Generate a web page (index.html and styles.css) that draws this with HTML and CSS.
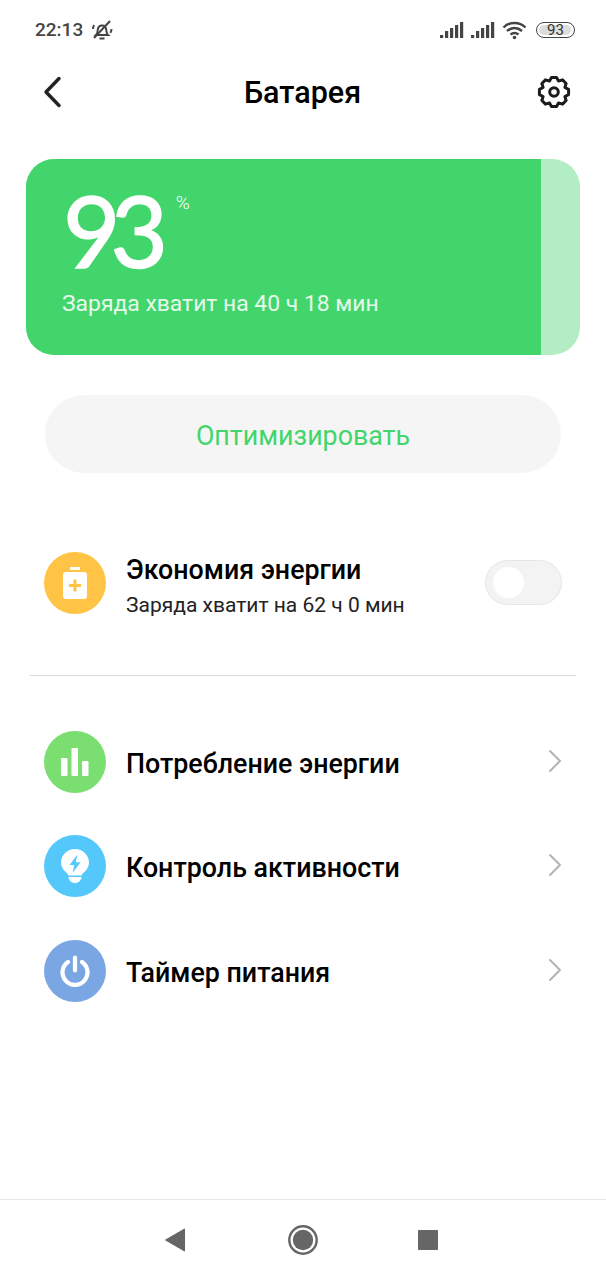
FILE: index.html
```html
<!DOCTYPE html>
<html>
<head>
    <title>Батарея</title>
    <meta charset="utf-8">
    <link rel="stylesheet" href="styles.css">
</head>
<body>
    <div class="screen">
        <div class="status">
            <div class="status-left">
                <span class="time">22:13</span>
                <svg class="bell" width="22" height="22" viewBox="0 0 22 22" fill="none" stroke="#444" stroke-width="2">
                    <path d="M5 16c1.400-1.200 1.600-2.800 1.700-4.700.2-3 2-4.800 4.300-4.800s4.100 1.800 4.300 4.800c.1 1.900.3 3.500 1.700 4.700z"/>
                    <path d="M8.500 19.500h5"/>
                    <path d="M3 19 19 2"/>
                    <path d="M2 10c0-1.500.4-2.800 1.200-3.800M20.500 10c0 1.500-.4 2.800-1.200 3.800"/>
                </svg>
            </div>
            <div class="status-right">
                <svg class="signal" width="24" height="18" viewBox="0 0 24 18" fill="#444">
                    <rect x="0" y="14" width="3.200" height="3"/><rect x="5" y="10" width="3.200" height="7"/><rect x="10" y="7" width="3.200" height="10"/><rect x="15" y="4" width="3.200" height="13"/><rect x="20" y="1" width="3.200" height="16"/>
                </svg>
                <svg class="signal" width="24" height="18" viewBox="0 0 24 18" fill="#444">
                    <rect x="0" y="14" width="3.200" height="3"/><rect x="5" y="10" width="3.200" height="7"/><rect x="10" y="7" width="3.200" height="10"/><rect x="15" y="4" width="3.200" height="13"/><rect x="20" y="1" width="3.200" height="16"/>
                </svg>
                <svg class="wifi" width="26" height="20" viewBox="0 0 26 20" fill="none" stroke="#444" stroke-width="2.400">
                    <path d="M1.500 7.500C7.500 1.500 17.500 1.500 23.500 7.500"/>
                    <path d="M5 11c4.500-4 10.500-4 15 0"/>
                    <path d="M8.500 14.500c2.500-2 5.500-2 8 0"/>
                    <circle cx="12.500" cy="17.500" r="1.800" fill="#444" stroke="none"/>
                </svg>
                <div class="battery"><span class="battery-fill"></span><span class="battery-num">93</span></div>
            </div>
        </div>

        <div class="header">
            <svg width="20" height="32" viewBox="0 0 20 32" fill="none" stroke="#222" stroke-width="3.400" stroke-linecap="round" stroke-linejoin="round">
                <path d="M16 2.500 3 16l13 13.500"/>
            </svg>
            <h1 class="title">Батарея</h1>
            <svg width="34" height="34" viewBox="0 0 34 34" fill="none" stroke="#1c1c1c" stroke-width="3" stroke-linejoin="round">
                <path d="M14.430 2.430 19.570 2.430 21.520 6.100 25.490 4.880 29.120 8.510 27.900 12.480 31.570 14.430 31.570 19.570 27.900 21.520 29.120 25.490 25.490 29.120 21.520 27.900 19.570 31.570 14.430 31.570 12.480 27.900 8.510 29.120 4.880 25.490 6.100 21.520 2.430 19.570 2.430 14.430 6.100 12.480 4.880 8.510 8.510 4.880 12.480 6.100z"/>
                <circle cx="17" cy="17" r="4.300"/>
            </svg>
        </div>

        <div class="card">
            <div class="card-main">
                <div class="level"><span class="level-num">93</span><span class="level-unit">%</span></div>
                <div class="card-text">Заряда хватит на 40 ч 18 мин</div>
            </div>
            <div class="card-rest"></div>
        </div>

        <div class="optimize">Оптимизировать</div>

        <div class="row row-saver">
            <div class="icon icon-yellow">
                <svg width="26" height="32" viewBox="0 0 26 32" fill="#fff">
                    <rect x="8" y="0" width="10" height="3" rx="1"/>
                    <rect x="1" y="5" width="24" height="27" rx="3"/>
                    <path d="M11.500 12.500h3v4.500H19v3h-4.500v4.500h-3V20H7v-3h4.500z" fill="#ffc445"/>
                </svg>
            </div>
            <div class="row-text">
                <div class="row-title">Экономия энергии</div>
                <div class="row-sub">Заряда хватит на 62 ч 0 мин</div>
            </div>
            <div class="toggle"><span class="knob"></span></div>
        </div>

        <div class="divider"></div>

        <div class="list">
            <div class="row">
                <div class="icon icon-green">
                    <svg width="28" height="28" viewBox="0 0 28 28" fill="#fff">
                        <rect x="0" y="10" width="6.500" height="18" rx="1.200"/>
                        <rect x="10.500" y="0" width="6.500" height="28" rx="1.200"/>
                        <rect x="21" y="13" width="6.500" height="15" rx="1.200"/>
                    </svg>
                </div>
                <div class="row-title">Потребление энергии</div>
                <svg class="chevron" width="14" height="24" viewBox="0 0 14 24" fill="none" stroke="#b4b4b4" stroke-width="2" stroke-linecap="round" stroke-linejoin="round"><path d="M2 2l10 10L2 22"/></svg>
            </div>
            <div class="row">
                <div class="icon icon-blue">
                    <svg width="28" height="34" viewBox="0 0 28 34" fill="#fff">
                        <path d="M14 0C6.300 0 0 6 0 13.300c0 4.500 2.300 7.800 5 10 1.200 1 2 2 2.300 3.200h13.400c.3-1.200 1.100-2.200 2.300-3.200 2.700-2.200 5-5.500 5-10C28 6 21.700 0 14 0z"/>
                        <path d="M7.500 28h13c0 3.300-3 6-6.500 6s-6.500-2.700-6.500-6z"/>
                        <path d="M16.500 5.500 8.500 16h4.800l-1.800 8 8-10.800h-4.800z" fill="#55c8fb"/>
                    </svg>
                </div>
                <div class="row-title">Контроль активности</div>
                <svg class="chevron" width="14" height="24" viewBox="0 0 14 24" fill="none" stroke="#b4b4b4" stroke-width="2" stroke-linecap="round" stroke-linejoin="round"><path d="M2 2l10 10L2 22"/></svg>
            </div>
            <div class="row">
                <div class="icon icon-slate">
                    <svg width="30" height="32" viewBox="0 0 30 32" fill="none" stroke="#fff" stroke-width="4.200" stroke-linecap="round">
                        <path d="M15 2.500v13"/>
                        <path d="M8 7a12.500 12.500 0 1 0 14 0"/>
                    </svg>
                </div>
                <div class="row-title">Таймер питания</div>
                <svg class="chevron" width="14" height="24" viewBox="0 0 14 24" fill="none" stroke="#b4b4b4" stroke-width="2" stroke-linecap="round" stroke-linejoin="round"><path d="M2 2l10 10L2 22"/></svg>
            </div>
        </div>

        <div class="navbar">
            <svg width="20" height="24" viewBox="0 0 20 24" fill="#666"><path d="M19.500 1v22L.5 12z" stroke="#666" stroke-linejoin="round"/></svg>
            <svg class="nav-home" width="30" height="30" viewBox="0 0 30 30"><circle cx="15" cy="15" r="13.700" fill="none" stroke="#666" stroke-width="2.400"/><circle cx="15" cy="15" r="10.200" fill="#666"/></svg>
            <div class="nav-square"></div>
        </div>
    </div>
</body>
</html>
```

FILE: styles.css
```css
* {
    box-sizing: border-box;
}
body {
    margin: 0;
    background: white;
    font-family: Roboto, sans-serif;
    color: #000;
}
.screen {
    width: 606px;
    height: 1280px;
    display: flex;
    flex-direction: column;
    overflow: hidden;
}
.status {
    height: 59px;
    padding: 0 31px 0 35px;
    display: flex;
    justify-content: space-between;
    align-items: center;
}
.status-left, .status-right {
    display: flex;
    align-items: center;
}
.time {
    font-size: 19px;
    font-weight: 500;
    color: #444;
}
.bell {
    margin-left: 8px;
}
.signal {
    margin-right: 7px;
}
.wifi {
    margin-right: 8px;
}
.battery {
    position: relative;
    width: 39px;
    height: 16px;
    border: 1.500px solid #444;
    border-radius: 8px;
    display: flex;
    align-items: center;
    justify-content: center;
    overflow: hidden;
}
.battery-fill {
    position: absolute;
    left: 2px;
    top: 2px;
    bottom: 2px;
    right: 3px;
    background: #ddd;
    border-radius: 5px;
}
.battery-num {
    position: relative;
    font-size: 15px;
    color: #333;
}
.header {
    height: 66px;
    padding: 0 35px 0 43px;
    display: flex;
    justify-content: space-between;
    align-items: center;
}
.title {
    margin: 0 0 0 5px;
    font-size: 30.500px;
    font-weight: 500;
}
.card {
    margin: 34px 26px 0;
    height: 196px;
    border-radius: 28px;
    overflow: hidden;
    display: flex;
    background: #b3edc4;
}
.card-main {
    width: 515px;
    background: #41d56b;
    padding: 22px 0 0 37px;
    color: white;
}
.level {
    display: flex;
    align-items: flex-start;
    height: 98px;
}
.level-num {
    font-family: Lato, sans-serif;
    font-size: 99px;
    line-height: 98px;
    letter-spacing: -10px;
    -webkit-text-stroke: 1.500px white;
}
.level-unit {
    font-size: 19px;
    font-weight: 300;
    margin: 10px 0 0 18px;
}
.card-text {
    margin-top: 11px;
    margin-left: -1px;
    font-size: 22.900px;
    color: #e6f9eb;
}
.optimize {
    margin: 40px 45px 0;
    height: 78px;
    padding-top: 4px;
    border-radius: 39px;
    background: #f5f5f5;
    color: #41d56b;
    font-size: 26.800px;
    display: flex;
    align-items: center;
    justify-content: center;
}
.row {
    display: flex;
    align-items: center;
    padding: 0 44px;
    height: 62px;
}
.row-saver {
    margin-top: 79px;
}
.icon {
    width: 62px;
    height: 62px;
    border-radius: 50%;
    display: flex;
    align-items: center;
    justify-content: center;
    flex-shrink: 0;
}
.icon-yellow {
    background: #ffc445;
}
.icon-green {
    background: #7ade70;
}
.icon-blue {
    background: #55c8fb;
}
.icon-slate {
    background: #7ba6e4;
}
.row-text {
    margin-left: 20px;
    flex: 1;
}
.row-text .row-title {
    margin-left: 0;
}
.row-title {
    margin-left: 20px;
    padding-top: 4px;
    font-size: 26.800px;
    font-weight: 500;
    flex: 1;
}
.row-sub {
    margin-top: 7px;
    font-size: 21px;
    color: #222;
}
.toggle {
    width: 77px;
    height: 45px;
    margin-top: -1px;
    border-radius: 23px;
    background: #f3f3f3;
    border: 1px solid #e6e6e6;
    padding: 6px 7px;
}
.knob {
    display: block;
    width: 31px;
    height: 31px;
    border-radius: 50%;
    background: white;
}
.divider {
    margin: 61px 30px 0;
    height: 1px;
    background: #dcdcdc;
}
.list {
    margin-top: 55px;
    display: flex;
    flex-direction: column;
    gap: 42.400px;
}
.chevron {
    margin-top: -2px;
}
.navbar {
    margin-top: auto;
    height: 81px;
    border-top: 1px solid #e6e6e6;
    display: flex;
    align-items: center;
    padding-left: 165px;
}
.nav-home {
    margin: 0 100px 0 103px;
}
.nav-square {
    width: 20px;
    height: 20px;
    background: #666;
    border-radius: 1px;
}
```
